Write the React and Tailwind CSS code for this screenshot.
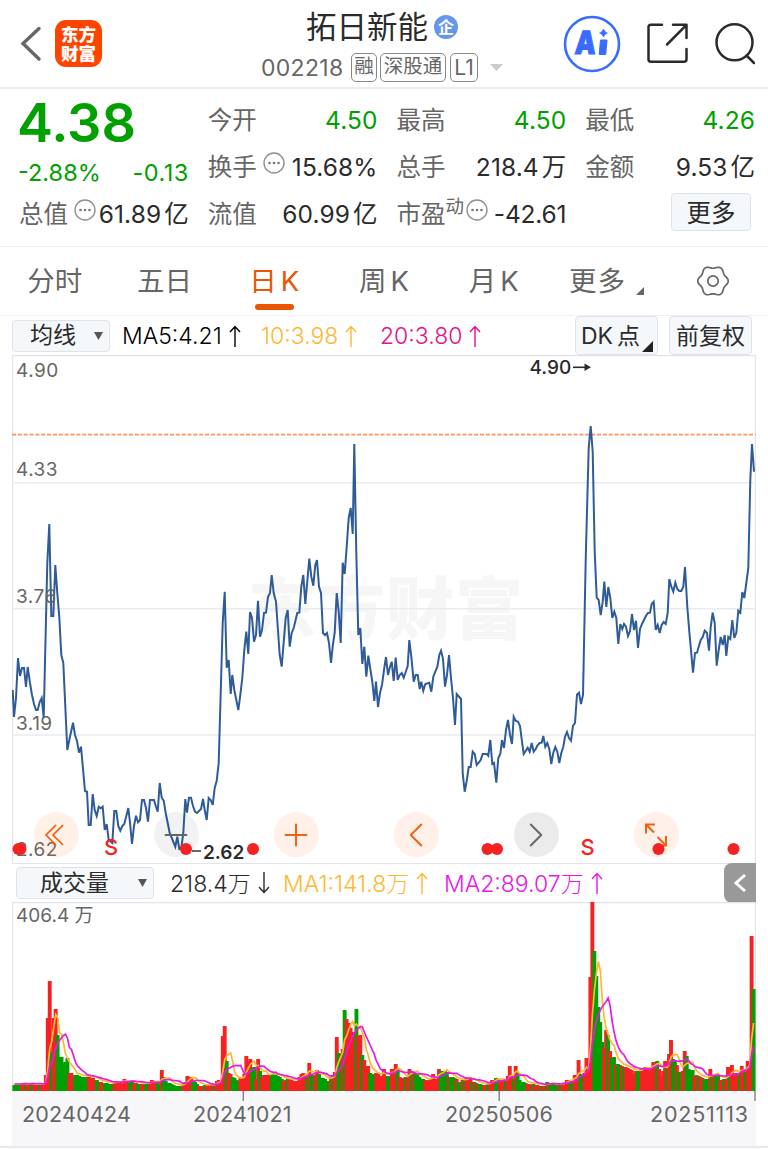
import { ChevronLeft, ChevronRight, Plus, Minus } from 'lucide-react';

const UP = '#f52222';
const DOWN = '#00a000';

// x,y pairs in the coordinates of the price chart's viewBox
const PRICE_LINE = `12.7,690 14,717 16,698 18,658 20,676 22,668 24,668 26,687 27.7,667 30,683 32,695 34,704 36,710
37.7,710 39.7,702 41.7,698 43.7,718 47.3,563 49.3,524 51.3,616 53.3,616 55.3,565 57.3,593 59.3,617 61.3,655 63.3,663
67.3,750 69.3,740 73,722.7 75,735 77,741 79,752.7 81,746.7 85,791 87,791.7 88.7,825 90.7,825 92.7,794 94.7,810
96.7,816 98.7,806.7 100.7,808.3 102.7,806.7 104.7,830 106.7,824 108.7,840 112.3,843 114.3,811 116.3,811 118.3,826
120.3,830.7 122.3,826 124.3,824 128.3,808 130,822.7 132,844 134,826 136,815.7 138,822.3 140,820 142,800 144,800
146,808 148,821.7 150,800 154,800 156,806.7 157.7,811.7 159.7,783 161.7,797.7 163.7,800.7 165.7,813 169.7,833
175.3,846.7 177.3,836.7 179.3,849 181.3,848 183.3,833 185.3,799 187,812.7 189,797.7 191,797.7 193,806 195,811.7
197,813 201,809 203,799 204.7,810 206.7,820 208.7,798 210.7,800 212.7,805 214.7,788 216.7,780.7 218.7,763 222.7,623
224.7,591.7 226.7,667.7 228.7,660 230.7,694 232.3,675 234.3,690 236.3,700 238.3,710 240.3,695 242.3,678 244.3,650
246.3,631.7 248.3,654 250,612 252,617.7 254,641.7 256,635 258,600.7 260,636.7 262,630 264,613 266,612.7 268,596.7
270,593 271.7,575 273.7,593 276,601.7 279.7,655 281.7,666.7 285.7,618 287.7,610 289.7,646.7 291.7,633 293.7,628
297.3,613 299.3,612.7 301.3,586.7 303.3,575 305.3,604 309.3,558.7 311.3,576.7 313.3,585.7 315.3,565 317,560
319,586.7 321,593 323,633 325,635 327,633 329,643 331,663 333,644 334.7,633 336.7,593 338.7,611.7 340.7,643
342.7,562.7 344.7,574 346.7,546.7 348.7,518 350.7,508 352.7,534 354.3,444 356.3,553 358.3,635 360.3,628 362.3,664
364.3,646.7 366.3,676.7 368.3,655.7 370.3,669 372.3,681.7 374.3,701 376,681.7 378,707 380,693 382,685 384,670
386,657 388,675 390,666.7 391.7,661.7 393.7,681 395.7,657.7 397.7,680 399.7,675 401.7,673 403.7,677.7 405.7,672
407.7,666 409.3,640 411.3,656.7 413.7,681.7 415.7,675 417.7,675 419.7,689 421.3,681.7 423.3,690.7 425.3,684
429.3,682.7 431.3,691.7 433.3,676.7 435.3,671.7 437.3,667 439.3,655 441,650.7 443,659 445,686.7 447,675 449,655
451,678 453,698 455,725 456.7,694 461,699 462.7,773 464.7,791.7 466.7,781 468.7,767 470.7,767 472.7,751.7
474.7,754 476.7,765 478.7,762.7 480.7,760 482.7,754 486.7,754 488.3,755.7 490.3,740 492.3,764 494,763 496.3,782.7
498.3,758 500.3,754 502,740 504,748 506,730 508,720 510,735 512,744 513.7,716.7 515.7,720.7 518,721.7 520,726
522,741.7 523.7,754 527.7,747.7 529.7,751.7 531.7,743 533.7,751.7 535.7,749 537.7,745 539.7,743 541.7,742.7
543.3,736 545.3,746.7 547.3,743 549.3,749 551.3,764 553.3,752.7 555.3,747 557.3,751.7 559.3,763 561.3,753
563.3,746.7 565,736.7 567,732 569,738 571,740.7 573,725.7 575,723 577,694.7 579,692.7 581,704 583,695 585.7,560
588.7,448 590.7,426 592.7,451.7 594.7,551.7 596.7,597.7 598.7,600 600.7,615 602.7,601.7 604.3,581.7 606.3,607
608.3,587 610.3,598 612.3,618 614.3,611.7 616.3,618 618.3,644 620.3,624 622.3,629 624,624 626,626.7 628,636
630,631 632,614 634,630 636,620.7 638,648 640,629 642,624 646,615.7 648,613 650,612.7 651.7,604 653.7,601.7
655.7,630 657.7,625 659.7,633 661.7,625 663.7,622 665.7,624 667.7,613 669.3,579 671.3,586.7 673.3,591.7
675.3,582.7 677.3,589 679.3,591 681.3,591 683.3,586.7 685,567 687.3,606.7 689.3,631.7 693,672.7 695,653 697,652.7
700.7,640 702.7,637 704.7,630.7 707,633 709,650.7 710.7,627 712.7,612.7 714.7,623 716.7,665.7 718.7,650
720.7,637 722.7,645 724.7,635 726.3,656 728.3,637 730.3,639 732.3,620 734.3,638 736.3,633 738.3,610.7
740.3,612.7 742.3,592 744.3,598 746.3,583 748.3,568 750.3,480 752,444 754,471.7`;

// one entry per trading day: r = up, g = down, then the bar height
const VOLUMES = `g6 g6 g6 g6 r7 r7 g6 r6 r6 g7 r6 r6 r6 g6 r6 r6 r16 r73 r110 g39 r73 r82 g56 g34 g34 g28 g29 g33
r18 r18 r16 g16 g16 g15 g14 g14 g13 g14 r14 r13 r13 r11 g11 g9 r9 r8 g8 g8 g7 g7 g7 r8 r10 r8 r8 r7 r12 r9 r8 g9
g9 r8 r8 g7 g7 r7 r6 g7 g7 r8 r11 r9 r7 g8 g7 r21 g14 g10 g8 g8 g7 g6 g5 g5 g5 g5 r7 r9 r15 r14 r14 g10 g9 g7 r5
r5 r5 g6 r5 r6 r5 r6 g5 r10 r11 r11 r55 r65 g30 r18 r17 g14 g13 g11 g10 r13 r14 r17 r35 r30 r32 g23 g24 r12 r32
g20 r13 r16 r16 r16 r16 g16 g17 g16 g15 g14 g12 r10 r11 g12 r12 r11 r10 r10 r10 r14 r17 r18 r17 g14 r28 g17 g15
r16 r21 g17 g13 g13 g12 g10 g10 r14 g16 r19 r54 g38 g37 r42 g81 r72 r68 r63 r59 r58 g82 r55 r56 g36 r31 r25 r25
g18 g16 g17 r18 r17 r14 r15 r22 r14 g15 g14 r22 r22 r27 g22 r14 r13 r13 g14 r14 r22 g20 r19 g17 g16 g14 g12 g12
r11 r10 r11 r13 r17 r12 r12 r22 g20 g20 g20 g19 r14 g13 g14 g13 r12 g9 g9 r11 g11 r13 r13 r12 g9 r9 g8 r7 g7 g6
r6 r6 g7 r8 r11 r10 g13 g12 r10 r10 r9 g10 r15 r25 r15 g12 r25 g18 g11 g9 g9 g8 r7 r7 r6 g7 r6 r6 r5 g5 r5 r5 g9
r7 g6 g7 g6 g6 r6 g6 r7 r8 r11 r11 g11 g9 r16 r15 r31 g17 g16 r18 r33 r22 r114 r189 g140 g115 g84 g69 g49 r43 r61
g56 r40 g33 g34 r27 g27 g26 r25 g24 r24 r23 r22 r21 r17 r20 g20 g20 r22 r22 r24 r23 r20 r23 r29 r29 g30 r22 r15
r20 r30 g26 r37 r51 g32 g31 r26 g19 g19 r20 r40 g35 g22 g21 g21 r15 r16 g15 r14 r13 g12 g12 g12 r22 g14 r15 g17
g15 r11 r10 g12 r11 r24 g14 r26 r18 r18 r18 g18 r25 r20 g19 r30 r30 r155 g102`
  .split(/\s+/)
  .map((v) => ({ color: v[0] === 'r' ? UP : DOWN, value: Number(v.slice(1)) }));

const STEP = 1.966;

const movingAverage = (days) =>
  VOLUMES.map((_, i) => {
    const part = VOLUMES.slice(Math.max(0, i - days + 1), i + 1);
    const avg = part.reduce((sum, v) => sum + v.value, 0) / part.length;
    return `${(i * STEP + 2.4).toFixed(1)},${(188 - avg).toFixed(1)}`;
  }).join(' ');

// six soft lobes around a circle
const GEAR = Array.from({ length: 72 }, (_, i) => {
  const a = (i * Math.PI) / 36;
  const r = 14 + 1.25 * Math.cos(6 * a);
  return `${(16 + r * Math.cos(a)).toFixed(2)},${(16 + r * Math.sin(a)).toFixed(2)}`;
}).join(' ');

const TABS = ['分时', '五日', '日K', '周K', '月K'];

const Dots = () => (
  <svg className="-mr-1 mb-2.5 h-[22px] w-[22px] shrink-0" viewBox="0 0 22 22" fill="none">
    <circle cx="11" cy="11" r="10" stroke="#8f8f8f" strokeWidth="1.4" />
    <circle cx="6.5" cy="11" r="1.3" fill="#777" />
    <circle cx="11" cy="11" r="1.3" fill="#777" />
    <circle cx="15.5" cy="11" r="1.3" fill="#777" />
  </svg>
);

const Stat = ({ label, value, unit, dots, sup, green }) => (
  <div className="flex h-[47px] items-center justify-between whitespace-nowrap">
    <span className="flex items-center text-[24.5px] text-[#666]">
      {label}
      {sup && <span className="mb-4 text-[18.5px]">{sup}</span>}
      {dots && <span className={sup ? 'ml-0.5' : 'ml-1.5'}><Dots /></span>}
    </span>
    <span className={`flex items-center text-[24.5px] ${green ? 'text-[#00a000]' : 'text-[#2b2b2b]'}`}>
      <span className={sup ? 'tracking-[-0.2px]' : 'tracking-[0.1px]'}>{value}</span>
      {unit && <span className="ml-[3px]">{unit}</span>}
    </span>
  </div>
);

const Header = () => (
  <div className="flex h-[89px] items-center border-b-2 border-[#eeeeee]">
    <svg className="ml-[19px] h-9 w-6" viewBox="0 0 24 36" fill="none">
      <path d="M20 2.500 4 17.500 20 33" stroke="#666" strokeWidth="3.4" strokeLinecap="round" />
    </svg>
    <div className="ml-3 flex h-[47px] w-[47px] flex-col items-center justify-center rounded-[11px] bg-[#ff4400] text-[17.5px] leading-[19px] font-black text-white">
      <span>东方</span>
      <span>财富</span>
    </div>
    <div className="ml-[159px] w-[246px]">
      <div className="ml-[45px] flex h-[41px] items-center pt-[3px]">
        <span className="text-[30.5px] text-[#2b2b2b]">拓日新能</span>
        <span className="ml-1.5 flex h-6 w-6 items-center justify-center rounded-full bg-[#6596ea] text-[16px] font-bold text-white">企</span>
      </div>
      <div className="mt-1.5 flex h-[30px] items-center text-[#666]">
        <span className="w-[90px] pt-0.5 text-[23px] tracking-[0.3px]">002218</span>
        <span className="flex h-[29px] w-[26px] items-center justify-center rounded-[5px] border border-[#888] text-[19.5px]">融</span>
        <span className="ml-[3px] flex h-[29px] w-[66px] items-center justify-center rounded-[5px] border border-[#888] text-[19.5px]">深股通</span>
        <span className="ml-1 flex h-[29px] w-7 items-center justify-center rounded-[5px] border border-[#888] pt-0.5 text-[21px]">L1</span>
        <svg className="ml-3 h-[7px] w-[13px]" viewBox="0 0 13 7"><path d="M0 0h13L6.5 7z" fill="#ccc" /></svg>
      </div>
    </div>
    <svg className="ml-[56px] h-[58px] w-[58px]" viewBox="0 0 58 58">
      <circle cx="29" cy="29" r="27" fill="none" stroke="#3a6bff" strokeWidth="2.6" />
      <text x="11" y="39" fontSize="32" fontWeight="900" fill="#3a6bff" stroke="#3a6bff" strokeWidth="1" textLength="21" lengthAdjust="spacingAndGlyphs" transform="skewX(-4) translate(3 0)">A</text>
      <path d="M37.500 25h6.500l-1.300 14.500h-6.500z" fill="#3a6bff" stroke="#3a6bff" strokeWidth="1" strokeLinejoin="round" />
      <path d="M40.500 14q1 3 4 4-3 1-4 4-1-3-4-4 3-1 4-4z" fill="#3a6bff" stroke="#3a6bff" strokeWidth=".6" />
    </svg>
    <svg className="ml-[25px] h-[42px] w-[42px]" viewBox="0 0 42 42" fill="none" stroke="#2b2b2b" strokeWidth="2.5" strokeLinecap="round" strokeLinejoin="round">
      <path d="M16 1.800H5q-2.500 0-2.500 2.500v32q0 2.500 2.500 2.500h33q2.500 0 2.500-2.500V26" />
      <path d="M27 1.800h13.500V15M39.500 2.800 21 21.500" />
    </svg>
    <svg className="ml-[25px] h-[42px] w-[42px]" viewBox="0 0 42 42" fill="none" stroke="#2b2b2b" strokeWidth="2.5" strokeLinecap="round">
      <circle cx="21.500" cy="19.300" r="18" />
      <path d="m33.500 32.500 7.500 7.500" />
    </svg>
  </div>
);

const Quote = () => (
  <div className="grid h-[157px] grid-cols-4 gap-x-[19px] pt-2 pr-[13px] pl-[19px]">
    <div>
      <div className="-mt-0.5 -ml-0.5 flex h-[54px] items-center text-[54px] font-semibold text-[#00a000]">4.38</div>
      <div className="flex h-[47px] items-center justify-between text-[23.5px] text-[#00a000]">
        <span className="-ml-px">-2.88%</span>
        <span className="tracking-[0.5px]">-0.13</span>
      </div>
      <div className="-mt-[5px]">
        <Stat label="总值" value="61.89" unit="亿" dots />
      </div>
    </div>
    <div>
      <Stat label="今开" value="4.50" green />
      <Stat label="换手" value="15.68%" dots />
      <Stat label="流值" value="60.99" unit="亿" />
    </div>
    <div>
      <Stat label="最高" value="4.50" green />
      <Stat label="总手" value="218.4" unit="万" />
      <Stat label="市盈" value="-42.61" sup="动" dots />
    </div>
    <div>
      <Stat label="最低" value="4.26" green />
      <Stat label="金额" value="9.53" unit="亿" />
      <button className="mt-0.5 mr-1 ml-auto flex h-[38px] w-20 items-center justify-center rounded border border-[#dfe3e9] bg-[#f5f8fa] pt-0.5 text-[24.5px] text-[#2b2b2b]">
        更多
      </button>
    </div>
  </div>
);

const Tabs = () => (
  <div className="grid h-[70px] grid-cols-7 border-y border-[#f0f0f0] text-[27.5px] text-[#666]">
    {TABS.map((tab, i) => (
      <div key={tab} className={`flex flex-col items-center ${i === 2 ? 'text-[#ea5504]' : ''}`}>
        <span className="flex h-[57px] items-center gap-1 pt-3 whitespace-nowrap">
          {tab.endsWith('K') ? <><span>{tab[0]}</span><span>K</span></> : tab}
        </span>
        {i === 2 && <span className="h-1.5 w-[39px] rounded-full bg-[#ea5504]" />}
      </div>
    ))}
    <div className="flex h-[57px] items-center justify-center pt-3 pl-1.5">
      <span className="tracking-[1px]">更多</span>
      <svg className="mt-[18px] ml-2.5 h-2 w-2 shrink-0" viewBox="0 0 8 8"><path d="M8 0v8H0z" fill="#666" /></svg>
    </div>
    <div className="flex items-center justify-center">
      <svg className="mr-px h-8 w-8" viewBox="0 0 32 32" fill="none" stroke="#666" strokeWidth="1.700" strokeLinejoin="round">
        <polygon points={GEAR} />
        <circle cx="16" cy="16" r="5.200" />
      </svg>
    </div>
  </div>
);

const Arrow = ({ down }) => (
  <svg className={`mb-0.5 ml-[7px] h-[22px] w-3 ${down ? 'rotate-180' : ''}`} viewBox="0 0 12 22" fill="none" stroke="currentColor" strokeWidth="1.400">
    <path d="M6 22V1M1 7l5-5.500L11 7" />
  </svg>
);

const Caret = () => (
  <svg className="h-2 w-[9px]" viewBox="0 0 9 8"><path d="M0 0h9L4.500 8z" fill="#555" /></svg>
);

const MaBar = () => (
  <div className="flex h-[39px] items-center pl-3 text-[23px] font-light">
    <div className="flex h-8 w-[98px] items-center justify-between rounded border border-[#dfe3e9] bg-[#f5f8fa] pr-1.5 pl-[17px] font-normal text-[#2b2b2b]">
      均线
      <Caret />
    </div>
    <span className="ml-3 flex w-[139px] items-center pt-0.5 text-black">MA5:4.21<Arrow /></span>
    <span className="flex w-[119px] items-center pt-0.5 text-[#ffb733]">10:3.98<Arrow /></span>
    <span className="flex w-[195px] items-center pt-0.5 text-[#e5108c]">20:3.80<Arrow /></span>
    <div className="flex h-[39px] w-[83px] items-center gap-1 rounded border border-[#dfe3e9] bg-[#f5f8fa] pt-0.5 pl-[5px] font-normal whitespace-nowrap text-[#2b2b2b]">
      <span>DK</span>
      <span>点</span>
      <svg className="mt-5 -ml-0.5 h-[11px] w-[11px] shrink-0" viewBox="0 0 11 11"><path d="M11 0v11H0z" fill="#222" /></svg>
    </div>
    <div className="ml-[11px] flex h-[39px] w-[83px] items-center justify-center rounded border border-[#dfe3e9] bg-[#f5f8fa] pt-0.5 font-normal whitespace-nowrap text-[#2b2b2b]">
      前复权
    </div>
  </div>
);

const round = 'flex h-[45px] w-[45px] items-center justify-center rounded-full';

const PriceChart = () => (
  <div className="relative mr-3 ml-3 h-[508px]">
    <svg className="h-full w-full" viewBox="12 355 744 508">
      <text x="248" y="634" fontSize="68" fontWeight="900" fill="#f6f6f6" letterSpacing="1">东方财富</text>
      <path d="M12.500 863V355.500h743V863" fill="none" stroke="#e2e4e9" strokeWidth="1.300" />
      <path d="M12 482.700h744M12 608.800h744M12 735h744" stroke="#e7ebf2" strokeWidth="1.600" />
      <path d="M12 434.700h744" stroke="#ff935c" strokeWidth="1.800" strokeDasharray="4 1.850" />
      <polyline points={PRICE_LINE} fill="none" stroke="#2f5c99" strokeWidth="2" />
      <g fontSize="19" fill="#666" letterSpacing=".5">
        <text x="16" y="376.500">4.90</text>
        <text x="16" y="476">4.33</text>
        <text x="16" y="602.500">3.76</text>
        <text x="16" y="729.500">3.19</text>
        <text x="16" y="856">2.62</text>
      </g>
      <text x="529.500" y="374" fontSize="19" fontWeight="500" fill="#2b2b2b">4.90</text>
      <path d="M573 367.300h13" stroke="#2b2b2b" strokeWidth="1.600" />
      <path d="m584.500 363.500 6.500 3.800-6.500 3.800z" fill="#2b2b2b" />
    </svg>
    <div className="absolute bottom-1.5 left-[21.500px] flex gap-[75px]">
      <span className={`${round} bg-[#ff6a1a]/10 text-[#f2600c]`}>
        <svg className="mr-1 h-6 w-5" viewBox="0 0 20 24" fill="none" stroke="currentColor" strokeWidth="1.700">
          <path d="M12 2 2 12l10 10M19 2 9 12l10 10" />
        </svg>
      </span>
      <span className={`${round} bg-black/5 text-[#666]`}><Minus size={36} strokeWidth={1.3} /></span>
      <span className={`${round} bg-[#fff0e9] text-[#f2600c]`}><Plus size={36} strokeWidth={1.3} /></span>
      <span className={`${round} bg-[#fff0e9] text-[#f2600c]`}><ChevronLeft size={42} strokeWidth={1.1} /></span>
      <span className={`${round} bg-[#ebebeb] text-[#666]`}><ChevronRight size={42} strokeWidth={1.1} /></span>
      <span className={`${round} bg-[#fff0e9] text-[#f2600c]`}>
        <svg className="h-6 w-6" viewBox="0 0 24 24" fill="none" stroke="currentColor" strokeWidth="2">
          <path d="M2 10.500V1.500h9M2 1.500l8 8M22 13v9.500h-9M22 22.500l-8.500-8.500" />
        </svg>
      </span>
    </div>
    <svg className="absolute inset-0 h-full w-full" viewBox="12 355 744 508">
      <g fill={UP}>
        {[18.5, 20.5, 186, 253, 487.5, 497, 658.5, 733.5].map((x) => (
          <circle key={x} cx={x} cy="849" r="6" />
        ))}
        <text x="104" y="854.500" fontSize="22" fontWeight="500">S</text>
        <text x="580.500" y="854.500" fontSize="22" fontWeight="500">S</text>
      </g>
      <path d="M192 851h9" stroke="#555" strokeWidth="1.800" />
      <text x="203" y="858.500" fontSize="19" fontWeight="600" fill="#2b2b2b">2.62</text>
    </svg>
  </div>
);

const VolumeBar = () => (
  <div className="mr-3 ml-3 flex h-[39px] items-center border-t border-[#e2e4e9] pl-1 text-[23px] font-light">
    <div className="flex h-8 w-[138px] items-center justify-between rounded border border-[#dfe3e9] bg-[#f5f8fa] pr-1.5 pl-[23px] font-normal text-[#2b2b2b]">
      成交量
      <Caret />
    </div>
    <span className="ml-4 flex w-[113px] items-center pt-0.5 whitespace-nowrap text-[#2b2b2b]">218.4万<Arrow down /></span>
    <span className="flex w-[161px] items-center pt-0.5 whitespace-nowrap text-[#ffb733]">MA1:141.8万<Arrow /></span>
    <span className="flex items-center pt-0.5 whitespace-nowrap text-[#e619e6]">MA2:89.07万<Arrow /></span>
    <div className="ml-auto flex h-10 w-8 shrink-0 items-center justify-center rounded-l-lg bg-[#999] text-white">
      <svg className="h-5 w-3" viewBox="0 0 12 20" fill="none"><path d="m11 2-9 8 9 8" stroke="white" strokeWidth="3" /></svg>
    </div>
  </div>
);

const VolumeChart = () => (
  <div className="mr-3 ml-3">
    <svg className="block h-[189px] w-[744px]" viewBox="0 0 744 189">
      <path d="M.5 189V.5h743V189" fill="none" stroke="#e2e4e9" strokeWidth="1.300" />
      {VOLUMES.map((v, i) => (
        <rect key={i} x={0.4 + i * STEP} y={189 - v.value} width="3.9" height={v.value} fill={v.color} />
      ))}
      <polyline points={movingAverage(5)} fill="none" stroke="#ffb733" strokeWidth="1.700" />
      <polyline points={movingAverage(10)} fill="none" stroke="#e619e6" strokeWidth="1.700" />
      <text x="4" y="19.500" fontSize="19" fill="#666">406.4 万</text>
    </svg>
    <svg className="block h-[55px] w-[744px] bg-[#f7f7fa]" viewBox="0 0 744 55">
      <path d="M231.300 0v10M487.200 0v10M743 0v10" stroke="#888" strokeWidth="1.500" />
      <g fontSize="21.500" fill="#666" letterSpacing=".2">
        <text x="10" y="31">20240424</text>
        <text x="181" y="31">20241021</text>
        <text x="433" y="31">20250506</text>
        <text x="638" y="31" letterSpacing=".8">20251113</text>
      </g>
    </svg>
  </div>
);

const App = () => (
  <div className="h-[1149px] w-[768px] overflow-hidden bg-white font-['Inter','Noto_Sans_CJK_SC',sans-serif]">
    <Header />
    <Quote />
    <Tabs />
    <MaBar />
    <PriceChart />
    <VolumeBar />
    <VolumeChart />
    <div className="h-0.5 bg-[#e9e9ec]" />
  </div>
);

export default App;
